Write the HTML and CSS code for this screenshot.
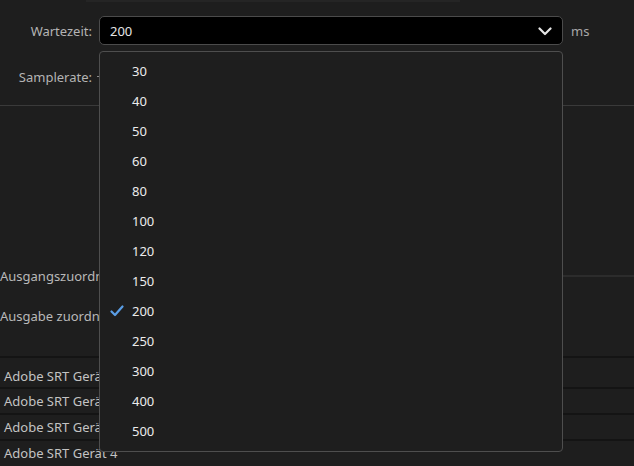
FILE: index.html
```html
<!DOCTYPE html>
<html lang="de">
<head>
<meta charset="utf-8">
<title>Wartezeit</title>
<link rel="stylesheet" href="styles.css">
</head>
<body>
<div class="top-strip"></div>
<div class="form">
  <div class="form-row">
    <span class="label">Wartezeit:</span>
    <div class="select">
      <span class="value">200</span>
      <svg class="chevron" width="14" height="9" viewBox="0 0 14 9"><path d="M1.5 1.5 L7 7 L12.5 1.5" fill="none" stroke="#e6e6e6" stroke-width="2.2" stroke-linecap="round" stroke-linejoin="round"/></svg>
    </div>
    <span class="unit">ms</span>
  </div>
  <div class="form-row second">
    <span class="label">Samplerate:</span>
    <div class="dash"></div>
  </div>
</div>
<div class="divider"></div>
<div class="section-row">
  <span class="section-label">Ausgangszuordnung</span>
  <div class="section-line"></div>
</div>
<div class="section-row second">
  <span class="section-label">Ausgabe zuordnen:</span>
</div>
<div class="table">
  <div class="trow first">Adobe SRT Gerät 1</div>
  <div class="trow">Adobe SRT Gerät 2</div>
  <div class="trow">Adobe SRT Gerät 3</div>
  <div class="trow last">Adobe SRT Gerät 4</div>
</div>

<div class="menu">
  <div class="item"><span class="check"></span><span>30</span></div>
  <div class="item"><span class="check"></span><span>40</span></div>
  <div class="item"><span class="check"></span><span>50</span></div>
  <div class="item"><span class="check"></span><span>60</span></div>
  <div class="item"><span class="check"></span><span>80</span></div>
  <div class="item"><span class="check"></span><span>100</span></div>
  <div class="item"><span class="check"></span><span>120</span></div>
  <div class="item"><span class="check"></span><span>150</span></div>
  <div class="item"><span class="check"><svg width="14" height="12" viewBox="0 0 14 12"><path d="M1.5 6.5 L5 10 L12.5 1.5" fill="none" stroke="#5a9ee6" stroke-width="2.2" stroke-linecap="round" stroke-linejoin="round"/></svg></span><span>200</span></div>
  <div class="item"><span class="check"></span><span>250</span></div>
  <div class="item"><span class="check"></span><span>300</span></div>
  <div class="item"><span class="check"></span><span>400</span></div>
  <div class="item"><span class="check"></span><span>500</span></div>
</div>
</body>
</html>
```
FILE: styles.css
```css
html, body {
  margin: 0;
  padding: 0;
}
body {
  width: 634px;
  height: 466px;
  overflow: hidden;
  background: #1e1e1e;
  font-family: "Noto Sans", "Open Sans", sans-serif;
  font-size: 13px;
  color: #b3b3b3;
  position: relative;
}
.top-strip {
  height: 2px;
  width: 374px;
  margin-left: 86px;
  background: #252525;
}
.form {
  padding-top: 14px;
}
.form-row {
  display: flex;
  align-items: center;
  height: 29px;
}
.form-row.second {
  margin-top: 17px;
}
.label {
  width: 92px;
  text-align: right;
  color: #b4b4b4;
}
.select {
  box-sizing: border-box;
  margin-left: 7px;
  width: 464px;
  height: 29px;
  background: #000;
  border: 1px solid #4b4b4b;
  border-radius: 5px;
  display: flex;
  align-items: center;
  justify-content: space-between;
  padding: 0 10px 0 10px;
}
.dash {
  width: 2px;
  height: 1px;
  margin-left: 5px;
  background: #8a8a8a;
}
.value {
  color: #e4e4e4;
}
.chevron {
  display: block;
  margin-top: 1px;
}
.unit {
  margin-left: 8px;
  color: #a8a8a8;
}
.divider {
  margin-top: 14px;
  height: 1px;
  background: #3a3a3a;
}
.section-row {
  display: flex;
  align-items: center;
  height: 20px;
  margin-top: 160px;
}
.section-row.second {
  margin-top: 20px;
}
.section-label {
  color: #b9b9b9;
  white-space: nowrap;
}
.section-line {
  flex: 1;
  height: 2px;
  margin-left: 8px;
  background: #2c2c2c;
}
.table {
  margin-top: 30px;
  border-top: 2px solid #141414;
}
.trow {
  box-sizing: border-box;
  height: 26px;
  line-height: 25px;
  padding-left: 4px;
  border-bottom: 2px solid #141414;
  color: #c3c3c3;
  white-space: nowrap;
}
.trow.first {
  height: 31px;
  padding-top: 6px;
}
.trow.last {
  border-bottom: none;
}
.menu {
  position: absolute;
  left: 99px;
  top: 51px;
  width: 464px;
  height: 401px;
  box-sizing: border-box;
  background: #1e1e1e;
  border: 1px solid #4e4e4e;
  border-radius: 4px;
  padding: 4px 0;
}
.item {
  display: flex;
  align-items: center;
  height: 30px;
  padding-left: 10px;
  color: #ececec;
}
.check {
  width: 14px;
  height: 12px;
  margin-right: 8px;
  display: flex;
  align-items: center;
}
.check svg {
  display: block;
}
```
